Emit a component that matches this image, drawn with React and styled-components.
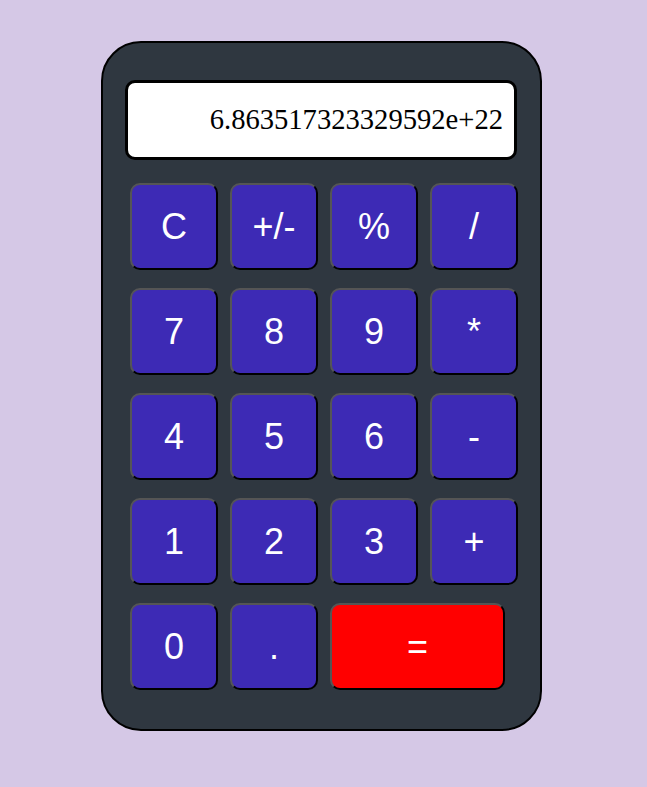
import React from 'react';
import styled, { createGlobalStyle } from 'styled-components';

const GlobalStyle = createGlobalStyle`
  html, body {
    margin: 0;
    padding: 0;
    background: #d5c8e6;
  }
`;

const Page = styled.div`
  display: flex;
  justify-content: center;
  padding-top: 41px;
  padding-right: 4px;
  height: 746px;
`;

const Calculator = styled.div`
  box-sizing: border-box;
  width: 441px;
  height: 690px;
  background: #2f3740;
  border: 2px solid #000;
  border-radius: 40px;
  padding: 37px 22px 0 22px;
  display: flex;
  flex-direction: column;
`;

const Display = styled.div`
  box-sizing: border-box;
  width: 392px;
  height: 80px;
  background: #fff;
  border: 3px solid #000;
  border-radius: 10px;
  padding: 0 11px;
  display: flex;
  align-items: center;
  justify-content: flex-end;
  font-family: 'Liberation Serif', serif;
  font-size: 28.6px;
  color: #000;
`;

const Keys = styled.div`
  display: grid;
  grid-template-columns: repeat(4, 88px);
  grid-auto-rows: 87px;
  column-gap: 12px;
  row-gap: 18px;
  margin-top: 23px;
  margin-left: 5px;
`;

const Key = styled.button`
  box-sizing: border-box;
  width: ${(props) => (props.$wide ? '175px' : '88px')};
  height: 87px;
  grid-column: ${(props) => (props.$wide ? 'span 2' : 'auto')};
  background: ${(props) => (props.$accent ? '#ff0000' : '#3d2ab5')};
  border: 2px solid;
  border-color: #555 #000 #000 #555;
  border-radius: 10px;
  color: #fff;
  font-family: 'Liberation Sans', Arial, sans-serif;
  font-size: 36px;
  padding: 0;
  display: flex;
  align-items: center;
  justify-content: center;
`;

const keys = [
  'C', '+/-', '%', '/',
  '7', '8', '9', '*',
  '4', '5', '6', '-',
  '1', '2', '3', '+',
  '0', '.',
];

const App = () => {
  return (
    <>
      <GlobalStyle />
      <Page>
        <Calculator>
          <Display>6.863517323329592e+22</Display>
          <Keys>
            {keys.map((k) => (
              <Key key={k}>{k}</Key>
            ))}
            <Key $wide $accent>=</Key>
          </Keys>
        </Calculator>
      </Page>
    </>
  );
};

export default App;
